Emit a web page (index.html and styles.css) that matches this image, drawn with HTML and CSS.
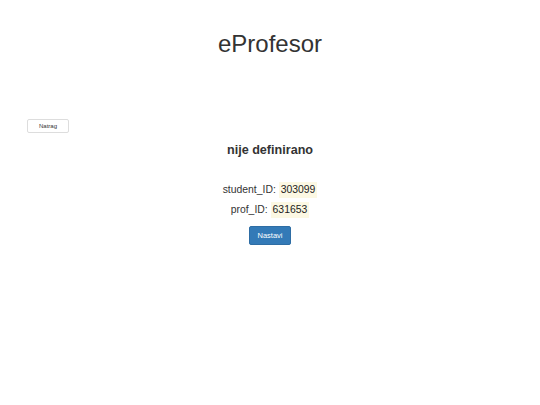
FILE: index.html
```html
<!DOCTYPE html>
<html lang="hr">
<head>
    <meta charset="UTF-8">
    <meta name="viewport" content="width=device-width, initial-scale=1.0">
    <title>eProfesor</title>
    <link rel="stylesheet" href="styles.css">
</head>
<body>
    <div class="page">
        <h1 class="title">eProfesor</h1>
        <div class="backRow">
            <button class="btnBack">Natrag</button>
        </div>
        <h2 class="status">nije definirano</h2>
        <div class="ids">
            <div class="idRow">student_ID: <span class="mark">303099</span></div>
            <div class="idRow">prof_ID: <span class="mark">631653</span></div>
        </div>
        <button class="btnNext">Nastavi</button>
    </div>
</body>
</html>
```

FILE: styles.css
```css
body {
    margin: 0;
    background-color: #fff;
    color: #333;
    font-family: 'Liberation Sans', Arial, Helvetica, sans-serif;
}

.page {
    display: flex;
    flex-direction: column;
    align-items: center;
}

.title {
    margin: 29px 0 0 0;
    font-size: 24px;
    font-weight: 400;
    line-height: 30px;
}

.backRow {
    align-self: stretch;
    padding-left: 27px;
    margin-top: 60px;
}

.btnBack {
    display: block;
    width: 42px;
    height: 14px;
    padding: 0;
    background-color: #fff;
    border: 1px solid #ddd;
    border-radius: 2px;
    font-family: 'Liberation Sans', Arial, sans-serif;
    font-size: 6px;
    color: #333;
}

.status {
    margin: 9px 0 0 0;
    font-size: 12.6px;
    font-weight: 700;
    line-height: 16px;
}

.ids {
    margin-top: 24px;
    display: flex;
    flex-direction: column;
    align-items: center;
    gap: 4px;
}

.idRow {
    font-size: 10.4px;
    line-height: 16px;
}

.mark {
    display: inline-block;
    background-color: #fcf8e3;
    color: #222;
    padding: 0 2px;
    line-height: 16px;
}

.btnNext {
    margin-top: 8px;
    width: 42px;
    height: 19px;
    padding: 0;
    background-color: #337ab7;
    border: 1px solid #2e6da4;
    border-radius: 2px;
    color: #fff;
    font-family: 'Liberation Sans', Arial, sans-serif;
    font-size: 7.5px;
}
```
